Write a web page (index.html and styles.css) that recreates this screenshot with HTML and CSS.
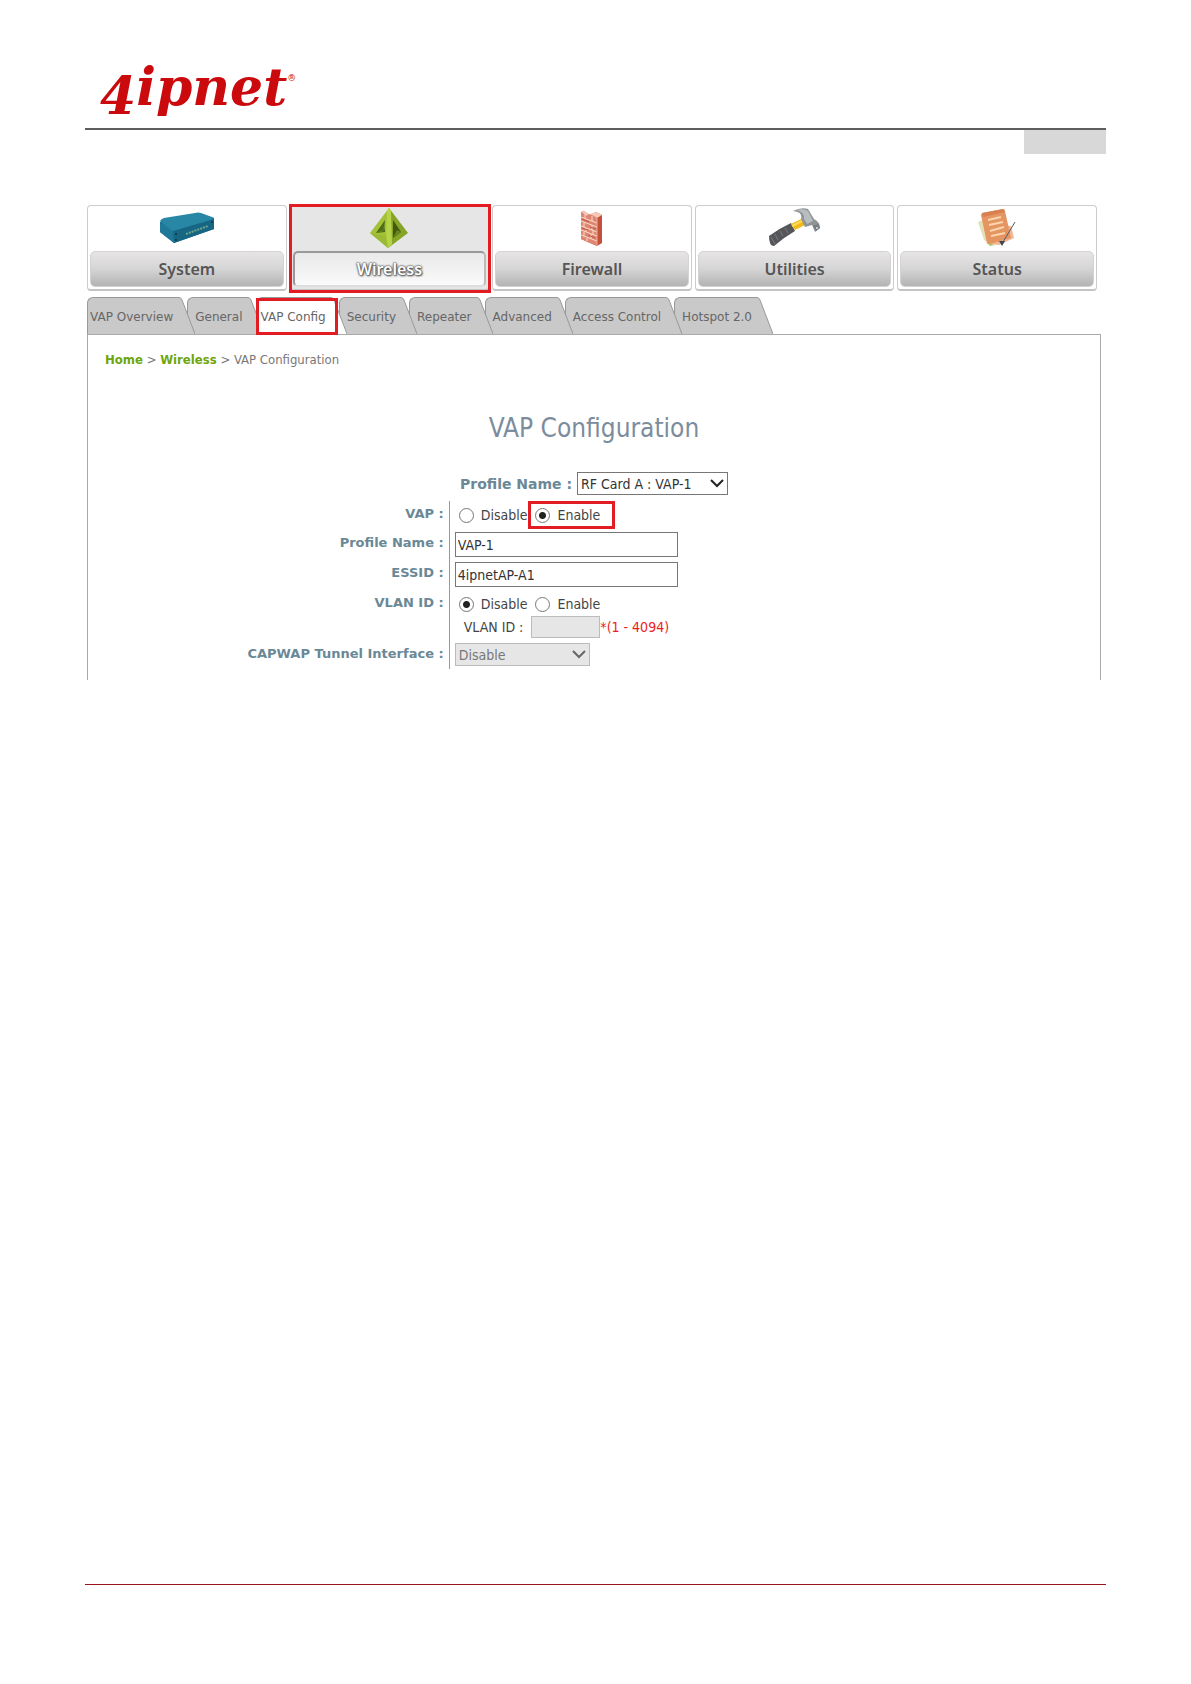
FILE: index.html
```html
<!DOCTYPE html>
<html lang="en">
<head>
<meta charset="UTF-8">
<meta name="viewport" content="width=device-width, initial-scale=1.0">
<title>VAP Configuration</title>
<link rel="stylesheet" href="styles.css">
</head>
<body>
<header class="page-header">
  <div class="logo"><span class="logo-digit">4</span>ipnet<sup class="logo-mark">®</sup></div>
</header>
<div class="page-tag"></div>

<main class="content">
  <!-- Main menu -->
  <nav class="main-menu">
    <a class="menu-card" href="#">
      <svg class="menu-icon" viewBox="0 0 56 40">
        <path d="M1 14 L37 6 L55 10 L55 21 L15 35 L1 24 Z" fill="#176b8c"/>
        <path d="M1 13 Q2 11 5 10 L36 5 Q39 4 42 5 L53 9 Q56 10 53 12 L16 23 Q13 24 11 22 Z" fill="#2787a5"/>
        <path d="M14 23 L55 11 L55 21 L15 35 Z" fill="#176784"/>
        <path d="M1 14 L14 23 L15 35 L1 24 Z" fill="#1f7898"/>
        <path d="M27 26 L49 18" stroke="#6fa58a" stroke-width="2" stroke-dasharray="2 1"/>
        <circle cx="17" cy="26" r="1" fill="#0b3548"/>
        <circle cx="17" cy="32" r="1" fill="#0b3548"/>
        <circle cx="53" cy="14" r="1" fill="#0b3548"/>
      </svg>
      <span class="menu-label">System</span>
    </a>
    <a class="menu-card active" href="#">
      <svg class="menu-icon" viewBox="0 0 40 40">
        <path d="M20 0 L1 25 L19 40 Z" fill="#a3c238"/>
        <path d="M20 0 L39 25 L19 40 Z" fill="#86a527"/>
        <path d="M16 12 L7 25 L16 24 Z" fill="#4f6b13"/>
        <path d="M16 12 L14 23 L7 25 L16 21 Z" fill="#74902a"/>
        <path d="M24 12 L24 30 L32 24 Z" fill="#43590f"/>
        <path d="M24 30 L32 24 L28 22 Z" fill="#6a8520"/>
        <path d="M18 3 L20 0 L22 3 L23 36 L19 40 L17 38 Z" fill="#b7d448"/>
        <path d="M1 25 L17 28 L19 40 Z" fill="#9aba34"/>
      </svg>
      <span class="menu-label">Wireless</span>
    </a>
    <a class="menu-card" href="#">
      <svg class="menu-icon" viewBox="0 0 40 40">
        <path d="M9 4 L12 3 L18 7 L24 4 L30 7 L30 35 L25 38 L9 31 Z" fill="#c2513b"/>
        <path d="M9 4 L15 8 L18 6 L25 10 L25 38 L9 31 Z" fill="#de8670"/>
        <path d="M9 4 L12 3 L17 6 L15 8 Z M18 6 L24 4 L30 7 L25 10 Z" fill="#f6c8b8"/>
        <path d="M9 9 L25 15 M9 13 L25 19 M9 18 L25 24 M9 22 L25 28 M9 27 L25 33 M13 6 V10 M20 8 V13 M12 14 V19 M20 17 V22 M14 20 V24 M21 22 V27 M12 24 V28 M19 26 V31 M15 30 V33" stroke="#f8dacd" stroke-width="1" fill="none"/>
        <path d="M10 11 L17 14 M18 19 L24 21 M10 20 L16 22 M16 27 L23 30" stroke="#c65440" stroke-width="1"/>
        <path d="M25 10 V38" stroke="#efab98" stroke-width="1"/>
      </svg>
      <span class="menu-label">Firewall</span>
    </a>
    <a class="menu-card" href="#">
      <svg class="menu-icon" viewBox="0 0 56 40">
        <path d="M2 28 Q13 20 24 15 L28 23 Q16 30 7 38 Q2 38 2 28 Z" fill="#55565a"/>
        <path d="M4 29 L8 36 M8 26 L11 32 M13 23 L16 28 M18 20 L21 25" stroke="#7b7c80" stroke-width="1"/>
        <path d="M24 16 L34 11 L38 17 L28 22 Z" fill="#f2b91b"/>
        <path d="M25 18 L35 13" stroke="#ffda5b" stroke-width="2"/>
        <path d="M26 3 Q34 -1 41 1 L47 11 Q53 14 53 20 L48 24 L45 17 L38 19 L34 11 Q36 4 26 3 Z" fill="#8f9495"/>
        <path d="M29 2 Q37 0 41 3 L46 13 L40 16 L37 11 Q38 4 29 2 Z" fill="#b8bebf"/>
        <path d="M46 18 L51 16 L53 20 L49 23 Z" fill="#777d80"/>
        <circle cx="50" cy="20" r="1" fill="#dce0e0"/>
      </svg>
      <span class="menu-label">Utilities</span>
    </a>
    <a class="menu-card" href="#">
      <svg class="menu-icon" viewBox="0 0 40 40">
        <path d="M1 14 L8 11 L12 35 L7 32 Z" fill="#e3e0b4"/>
        <path d="M8 16 L34 18 L37 30 L22 37 L10 36 Z" fill="#f1b793"/>
        <path d="M10 35 L18 37 L13 38 Z" fill="#a9c96b"/>
        <path d="M5 5 L26 1 Q28 1 28 3 L34 30 L13 36 L10 35 L4 7 Z" fill="#e59562"/>
        <path d="M5 5 L26 1 L28 4 L6 9 Z" fill="#d9804f"/>
        <path d="M11 12 L24 9 M12 17 L26 14 M13 23 L27 19 M14 28 L28 25" stroke="#fbd5ac" stroke-width="2" fill="none"/>
        <path d="M38 14 L26 34" stroke="#555a6b" stroke-width="1"/>
        <path d="M22 33 L28 33 L25 38 Z" fill="#3d4558"/>
      </svg>
      <span class="menu-label">Status</span>
    </a>
  </nav>

  <!-- Sub menu tabs -->
  <nav class="tabs">
    <a class="tab" href="#"><span class="tab-text">VAP Overview</span><svg class="tab-edge" viewBox="0 0 16 37"><path d="M0 0.5 Q2 0.5 3 3 L16 37 H0 Z"/><path class="edge-line" d="M0 0.5 Q2 0.5 3 3 L16 37"/></svg></a>
    <a class="tab" href="#"><span class="tab-text">General</span><svg class="tab-edge" viewBox="0 0 16 37"><path d="M0 0.5 Q2 0.5 3 3 L16 37 H0 Z"/><path class="edge-line" d="M0 0.5 Q2 0.5 3 3 L16 37"/></svg></a>
    <a class="tab active" href="#"><span class="tab-text">VAP Config</span><svg class="tab-edge" viewBox="0 0 16 37"><path d="M0 0.5 Q2 0.5 3 3 L16 37 H0 Z"/><path class="edge-line" d="M0 0.5 Q2 0.5 3 3 L16 37"/></svg></a>
    <a class="tab" href="#"><span class="tab-text">Security</span><svg class="tab-edge" viewBox="0 0 16 37"><path d="M0 0.5 Q2 0.5 3 3 L16 37 H0 Z"/><path class="edge-line" d="M0 0.5 Q2 0.5 3 3 L16 37"/></svg></a>
    <a class="tab" href="#"><span class="tab-text">Repeater</span><svg class="tab-edge" viewBox="0 0 16 37"><path d="M0 0.5 Q2 0.5 3 3 L16 37 H0 Z"/><path class="edge-line" d="M0 0.5 Q2 0.5 3 3 L16 37"/></svg></a>
    <a class="tab" href="#"><span class="tab-text">Advanced</span><svg class="tab-edge" viewBox="0 0 16 37"><path d="M0 0.5 Q2 0.5 3 3 L16 37 H0 Z"/><path class="edge-line" d="M0 0.5 Q2 0.5 3 3 L16 37"/></svg></a>
    <a class="tab" href="#"><span class="tab-text">Access Control</span><svg class="tab-edge" viewBox="0 0 16 37"><path d="M0 0.5 Q2 0.5 3 3 L16 37 H0 Z"/><path class="edge-line" d="M0 0.5 Q2 0.5 3 3 L16 37"/></svg></a>
    <a class="tab" href="#"><span class="tab-text">Hotspot 2.0</span><svg class="tab-edge" viewBox="0 0 16 37"><path d="M0 0.5 Q2 0.5 3 3 L16 37 H0 Z"/><path class="edge-line" d="M0 0.5 Q2 0.5 3 3 L16 37"/></svg></a>
  </nav>

  <section class="panel">
    <div class="breadcrumb"><a href="#">Home</a> &gt; <a href="#">Wireless</a> &gt; VAP Configuration</div>
    <h1>VAP Configuration</h1>

    <form>
      <div class="profile-select">
        <label class="field-label" for="profile">Profile Name :</label>
        <select id="profile" class="select">
          <option>RF Card A : VAP-1</option>
        </select>
      </div>

      <div class="form-row">
        <span class="field-label" id="vapLabel">VAP :</span>
        <div class="field radios" role="radiogroup" aria-labelledby="vapLabel">
          <label class="radio"><input type="radio" name="vap">Disable</label>
          <label class="radio marked"><input type="radio" name="vap" checked>Enable</label>
        </div>
      </div>
      <div class="form-row">
        <label class="field-label" for="profileName">Profile Name :</label>
        <div class="field"><input id="profileName" class="text-input" type="text" value="VAP-1"></div>
      </div>
      <div class="form-row">
        <label class="field-label" for="essid">ESSID :</label>
        <div class="field"><input id="essid" class="text-input" type="text" value="4ipnetAP-A1"></div>
      </div>
      <div class="form-row">
        <span class="field-label" id="vlanLabel">VLAN ID :</span>
        <div class="field">
          <div class="radios" role="radiogroup" aria-labelledby="vlanLabel">
            <label class="radio"><input type="radio" name="vlan" checked>Disable</label>
            <label class="radio"><input type="radio" name="vlan">Enable</label>
          </div>
          <div class="vlan-id">
            <label for="vlanId">VLAN ID :</label>
            <input id="vlanId" class="vlan-input" type="text" disabled>
            <span class="hint">*(1 - 4094)</span>
          </div>
        </div>
      </div>
      <div class="form-row">
        <label class="field-label" for="capwap">CAPWAP Tunnel Interface :</label>
        <div class="field">
          <select id="capwap" class="select select-small" disabled>
            <option>Disable</option>
          </select>
        </div>
      </div>
    </form>
  </section>
</main>

<footer class="page-footer"></footer>
</body>
</html>
```
FILE: styles.css
```css
* {
  box-sizing: border-box;
}

body {
  margin: 0;
  padding: 0 85px 99px;
  min-height: 100vh;
  display: flex;
  flex-direction: column;
  background-color: #fff;
  font-family: "DejaVu Sans Condensed", "DejaVu Sans", Verdana, sans-serif;
  font-size: 14px;
  color: #444;
}

a {
  text-decoration: none;
}

/* Header */
.page-header {
  height: 130px;
  padding: 55px 0 0 15px;
  border-bottom: 2px solid #5f5d5e;
}

.logo {
  font-family: "DejaVu Serif", serif;
  font-size: 52px;
  font-weight: bold;
  font-style: italic;
  line-height: 63px;
  color: #cb0a0e;
}

.logo-digit {
  vertical-align: -9px;
  line-height: 1;
}

.logo-mark {
  font-size: 9px;
  font-weight: normal;
  font-style: normal;
  line-height: 1;
  vertical-align: 24px;
}

.page-tag {
  align-self: flex-end;
  width: 82px;
  height: 24px;
  background-color: #d8d8d8;
}

.content {
  flex: 1;
  padding: 51px 5px 0 2px;
}

/* Main menu */
.main-menu {
  display: grid;
  grid-template-columns: repeat(5, 1fr);
  gap: 3px;
  padding-right: 4px;
}

.menu-card {
  position: relative;
  display: flex;
  flex-direction: column;
  align-items: center;
  padding: 2px;
  border: 1px solid #ccc;
  border-bottom: 2px solid #c4c4c4;
  border-radius: 4px;
  background-color: #fff;
}

.menu-icon {
  height: 40px;
  margin: 0 0 3px;
}

.menu-label {
  width: 100%;
  height: 36px;
  border: 1px solid #d4d2d2;
  border-radius: 5px;
  background: linear-gradient(#e6e4e4, #d6d5d5 50%, #b4b3b3);
  font-family: "Noto Sans", sans-serif;
  font-size: 16px;
  font-weight: 600;
  line-height: 34px;
  text-align: center;
  color: #555;
}

.menu-card.active {
  background-color: #e6e6e6;
}

.menu-card.active .menu-label {
  border: 2px solid #999;
  border-right-color: #bbb;
  border-bottom-color: #ddd;
  background: linear-gradient(#e9e9e9, #fafafa);
  line-height: 32px;
  color: #fff;
  text-shadow: 0 0 2px #444, 0 0 2px #444, 1px 1px 2px #555;
}

/* Red frames round the highlighted items */
.menu-card.active::after,
.tab.active::after,
.radio.marked::after {
  content: "";
  position: absolute;
  border: 3px solid #e31b23;
  z-index: 2;
}

.menu-card.active::after {
  inset: -2px -3px -4px -2px;
}

/* Tabs */
.tabs {
  display: flex;
  margin-top: 6px;
}

.tab {
  position: relative;
  display: flex;
  height: 37px;
  margin-right: -8px;
  font-family: "DejaVu Sans", Verdana, sans-serif;
  font-size: 12px;
  color: #666;
}

.tab-text {
  padding: 0 5px 0 7px;
  border: 1px solid #999;
  border-right: none;
  border-bottom: none;
  border-radius: 6px 0 0 0;
  background-color: #c9c9c9;
  line-height: 38px;
}

.tab:first-child .tab-text {
  padding: 0 6px 0 2px;
}

.tab-edge {
  position: relative;
  z-index: 1;
  width: 16px;
  height: 37px;
  fill: #c9c9c9;
}

.edge-line {
  fill: none;
  stroke: #999;
}

.tab.active {
  z-index: 2;
}

.tab.active .tab-text {
  padding-left: 4px;
  background-color: #fff;
}

.tab.active .tab-edge {
  fill: #fff;
}

.tab.active::after {
  inset: 1px 9px -1px 0;
}

/* Panel */
.panel {
  padding: 15px 0 11px;
  border: 1px solid #aaa;
  border-bottom: none;
}

.breadcrumb {
  padding-left: 17px;
  font-size: 13px;
  line-height: 20px;
  color: #777;
}

.breadcrumb a {
  font-weight: bold;
  color: #6fa50f;
}

h1 {
  margin: 40px 0 26px;
  font-size: 26px;
  font-weight: normal;
  line-height: 36px;
  text-align: center;
  color: #7b8d9c;
}

.profile-select {
  display: flex;
  justify-content: center;
  align-items: center;
  gap: 5px;
  margin-bottom: 6px;
}

.field-label {
  font-family: "DejaVu Sans", Verdana, sans-serif;
  font-size: 14px;
  font-weight: bold;
  color: #6a8896;
}

.form-row {
  display: grid;
  grid-template-columns: 36fr 65fr;
}

.form-row .field-label {
  padding: 3px 5px 0 0;
  font-size: 13px;
  line-height: 20px;
  text-align: right;
}

.field {
  padding: 2px 0 3px 5px;
  border-left: 1px solid #999;
}

.select,
.text-input {
  display: block;
  border: 1px solid #777;
  border-radius: 0;
  font-family: inherit;
  font-size: 14px;
  color: #333;
}

.select {
  appearance: none;
  width: 151px;
  height: 23px;
  padding: 0 3px;
  background: #fff url("data:image/svg+xml,%3Csvg xmlns='http://www.w3.org/2000/svg' width='14' height='9'%3E%3Cpath d='M1 1l6 6 6-6' fill='none' stroke='%23222' stroke-width='2'/%3E%3C/svg%3E") no-repeat right 3px center;
}

.select-small {
  width: 135px;
}

.select:disabled {
  border-color: #bbb;
  background-color: #e6e6e6;
  background-image: url("data:image/svg+xml,%3Csvg xmlns='http://www.w3.org/2000/svg' width='14' height='9'%3E%3Cpath d='M1 1l6 6 6-6' fill='none' stroke='%23666' stroke-width='2'/%3E%3C/svg%3E");
  color: #777;
  opacity: 1;
}

.text-input {
  width: 223px;
  height: 25px;
  padding: 0 2px;
}

.radios {
  display: flex;
  align-items: center;
  gap: 4px;
}

.radio {
  position: relative;
  display: flex;
  align-items: center;
  height: 24px;
  padding-left: 4px;
}

.radio input {
  appearance: none;
  width: 15px;
  height: 15px;
  margin: 0 7px 0 0;
  border: 1px solid #777;
  border-radius: 50%;
  background-color: #fff;
}

.radio input:checked {
  background: radial-gradient(circle, #222 0 3px, #fff 4px);
}

.radio.marked::after {
  inset: -2px -15px -2px -3px;
}

.vlan-id {
  display: flex;
  align-items: center;
  padding-left: 9px;
}

.vlan-input {
  width: 69px;
  height: 22px;
  margin-left: 8px;
  border: 1px solid #bbb;
  background-color: #e6e6e6;
}

.hint {
  color: #ed1c24;
}

/* Footer */
.page-footer {
  border-top: 1px solid #97151b;
}
```
